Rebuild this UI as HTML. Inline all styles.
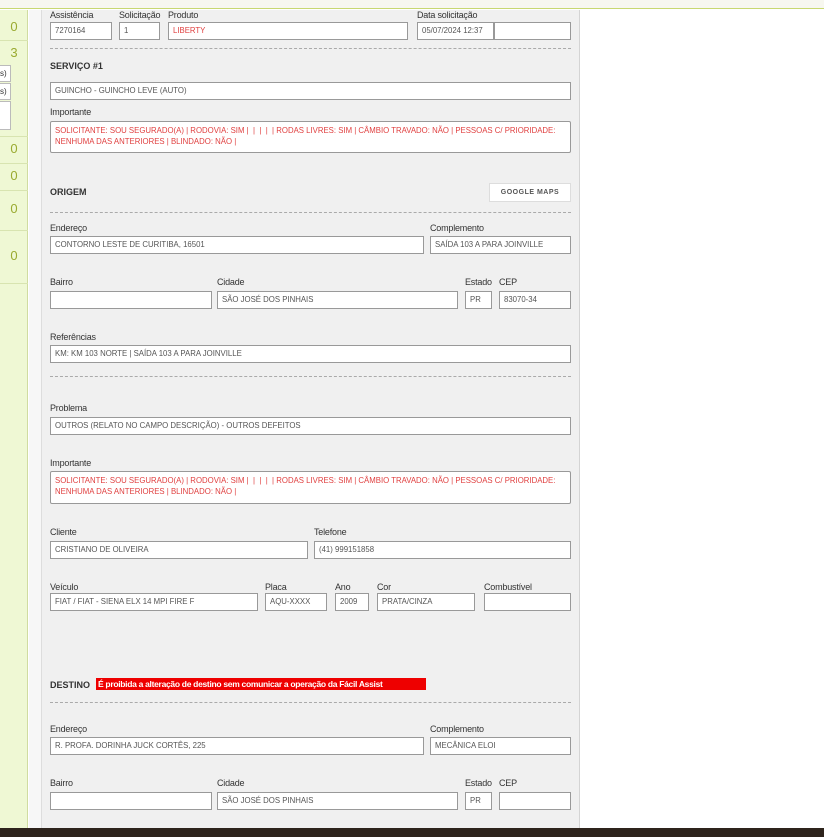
<!DOCTYPE html>
<html><head><meta charset="utf-8"><style>
*{margin:0;padding:0;box-sizing:border-box}
body{width:824px;height:837px;position:relative;overflow:hidden;background:#fff;font-family:"Liberation Sans",sans-serif}
.a{position:absolute}
.l{position:absolute;font-size:9px;color:#333;line-height:10px;letter-spacing:-0.2px}
.i{position:absolute;background:#fff;border:1px solid #999;font-size:7.8px;color:#555;padding:0 4px;line-height:16px;white-space:nowrap;overflow:hidden}
.r{color:#e04040}
.t{position:absolute;background:#fff;border:1px solid #999;border-radius:2px;font-size:7.8px;color:#e04040;padding:3px 4px;line-height:11px}
.d{position:absolute;left:50px;width:521px;border-top:1px dashed #aaa;height:0}
.h{position:absolute;font-size:9px;font-weight:bold;color:#333}
.n{position:absolute;left:0;width:28px;text-align:center;font-size:13px;color:#9aaa30}
.s{position:absolute;left:0;width:28px;height:1px;background:#d8e4b0}
</style></head><body>
<div class="a" style="left:0;top:0;width:824px;height:9px;background:#f7f7ef;border-bottom:1px solid #c8d870"></div>
<div class="a" style="left:0;top:10px;width:28px;height:818px;background:#eff8d4;border-right:1px solid #d0dca0"></div>
<div class="a" style="left:29px;top:10px;width:12px;height:818px;background:#f7f7f7"></div>
<div class="a" style="left:41px;top:10px;width:539px;height:818px;background:#f0f0f0;border-left:1px solid #ddd;border-right:1px solid #d4d4d4"></div>
<div class="a" style="left:0;top:828px;width:824px;height:9px;background:#2e241c"></div>
<div class="n" style="top:19px">0</div><div class="s" style="top:40px"></div>
<div class="n" style="top:45px">3</div>
<div class="a" style="left:0;top:65px;width:11px;height:17px;background:#fff;border:1px solid #bbb;border-left:0;font-size:8px;line-height:15px;color:#333">s)</div>
<div class="a" style="left:0;top:83px;width:11px;height:17px;background:#fff;border:1px solid #bbb;border-left:0;font-size:8px;line-height:15px;color:#333">s)</div>
<div class="a" style="left:0;top:101px;width:11px;height:29px;background:#fff;border:1px solid #bbb;border-left:0"></div>
<div class="s" style="top:136px"></div>
<div class="n" style="top:141px">0</div><div class="s" style="top:163px"></div>
<div class="n" style="top:168px">0</div><div class="s" style="top:190px"></div>
<div class="n" style="top:201px">0</div><div class="s" style="top:230px"></div>
<div class="n" style="top:248px">0</div><div class="s" style="top:283px"></div>

<div class="l" style="left:50px;top:10px">Assistência</div>
<div class="l" style="left:119px;top:10px">Solicitação</div>
<div class="l" style="left:168px;top:10px">Produto</div>
<div class="l" style="left:417px;top:10px">Data solicitação</div>
<div class="i" style="left:50px;top:22px;width:62px;height:18px">7270164</div>
<div class="i" style="left:119px;top:22px;width:41px;height:18px">1</div>
<div class="i r" style="left:168px;top:22px;width:240px;height:18px">LIBERTY</div>
<div class="i" style="left:417px;top:22px;width:77px;height:18px">05/07/2024 12:37</div>
<div class="i" style="left:494px;top:22px;width:77px;height:18px"></div>
<div class="d" style="top:48px"></div>
<div class="h" style="left:50px;top:61px">SERVIÇO #1</div>
<div class="i" style="left:50px;top:82px;width:521px;height:18px">GUINCHO - GUINCHO LEVE (AUTO)</div>
<div class="l" style="left:50px;top:107px">Importante</div>
<div class="t" style="left:50px;top:121px;width:521px;height:32px">SOLICITANTE: SOU SEGURADO(A) | RODOVIA: SIM | &nbsp;| &nbsp;| &nbsp;| &nbsp;| RODAS LIVRES: SIM | CÂMBIO TRAVADO: NÃO | PESSOAS C/ PRIORIDADE: NENHUMA DAS ANTERIORES | BLINDADO: NÃO |</div>
<div class="h" style="left:50px;top:187px">ORIGEM</div>
<div class="a" style="left:489px;top:183px;width:82px;height:19px;background:#fff;border:1px solid #ddd;font-size:7px;font-weight:bold;color:#555;text-align:center;line-height:17px;letter-spacing:0.5px">GOOGLE MAPS</div>
<div class="d" style="top:212px"></div>
<div class="l" style="left:50px;top:223px">Endereço</div>
<div class="l" style="left:430px;top:223px">Complemento</div>
<div class="i" style="left:50px;top:236px;width:374px;height:18px">CONTORNO LESTE DE CURITIBA, 16501</div>
<div class="i" style="left:430px;top:236px;width:141px;height:18px">SAÍDA 103 A PARA JOINVILLE</div>
<div class="l" style="left:50px;top:277px">Bairro</div>
<div class="l" style="left:217px;top:277px">Cidade</div>
<div class="l" style="left:465px;top:277px">Estado</div>
<div class="l" style="left:499px;top:277px">CEP</div>
<div class="i" style="left:50px;top:291px;width:162px;height:18px"></div>
<div class="i" style="left:217px;top:291px;width:241px;height:18px">SÃO JOSÉ DOS PINHAIS</div>
<div class="i" style="left:465px;top:291px;width:27px;height:18px">PR</div>
<div class="i" style="left:499px;top:291px;width:72px;height:18px">83070-34</div>
<div class="l" style="left:50px;top:332px">Referências</div>
<div class="i" style="left:50px;top:345px;width:521px;height:18px">KM: KM 103 NORTE | SAÍDA 103 A PARA JOINVILLE</div>
<div class="d" style="top:376px"></div>
<div class="l" style="left:50px;top:403px">Problema</div>
<div class="i" style="left:50px;top:417px;width:521px;height:18px">OUTROS (RELATO NO CAMPO DESCRIÇÃO) - OUTROS DEFEITOS</div>
<div class="l" style="left:50px;top:458px">Importante</div>
<div class="t" style="left:50px;top:471px;width:521px;height:33px">SOLICITANTE: SOU SEGURADO(A) | RODOVIA: SIM | &nbsp;| &nbsp;| &nbsp;| &nbsp;| RODAS LIVRES: SIM | CÂMBIO TRAVADO: NÃO | PESSOAS C/ PRIORIDADE: NENHUMA DAS ANTERIORES | BLINDADO: NÃO |</div>
<div class="l" style="left:50px;top:527px">Cliente</div>
<div class="l" style="left:314px;top:527px">Telefone</div>
<div class="i" style="left:50px;top:541px;width:258px;height:18px">CRISTIANO DE OLIVEIRA</div>
<div class="i" style="left:314px;top:541px;width:257px;height:18px">(41) 999151858</div>
<div class="l" style="left:50px;top:582px">Veículo</div>
<div class="l" style="left:265px;top:582px">Placa</div>
<div class="l" style="left:335px;top:582px">Ano</div>
<div class="l" style="left:377px;top:582px">Cor</div>
<div class="l" style="left:484px;top:582px">Combustível</div>
<div class="i" style="left:50px;top:593px;width:208px;height:18px">FIAT / FIAT - SIENA ELX 14 MPI FIRE F</div>
<div class="i" style="left:265px;top:593px;width:62px;height:18px">AQU-XXXX</div>
<div class="i" style="left:335px;top:593px;width:34px;height:18px">2009</div>
<div class="i" style="left:377px;top:593px;width:98px;height:18px">PRATA/CINZA</div>
<div class="i" style="left:484px;top:593px;width:87px;height:18px"></div>
<div class="h" style="left:50px;top:680px">DESTINO</div>
<div class="a" style="left:96px;top:678px;width:330px;height:12px;background:#ee0000;color:#fff;font-size:8.5px;font-weight:bold;line-height:12px;padding-left:2px;white-space:nowrap;letter-spacing:-0.3px">É proibida a alteração de destino sem comunicar a operação da Fácil Assist</div>
<div class="d" style="top:702px"></div>
<div class="l" style="left:50px;top:724px">Endereço</div>
<div class="l" style="left:430px;top:724px">Complemento</div>
<div class="i" style="left:50px;top:737px;width:374px;height:18px">R. PROFA. DORINHA JUCK CORTÊS, 225</div>
<div class="i" style="left:430px;top:737px;width:141px;height:18px">MECÂNICA ELOI</div>
<div class="l" style="left:50px;top:778px">Bairro</div>
<div class="l" style="left:217px;top:778px">Cidade</div>
<div class="l" style="left:465px;top:778px">Estado</div>
<div class="l" style="left:499px;top:778px">CEP</div>
<div class="i" style="left:50px;top:792px;width:162px;height:18px"></div>
<div class="i" style="left:217px;top:792px;width:241px;height:18px">SÃO JOSÉ DOS PINHAIS</div>
<div class="i" style="left:465px;top:792px;width:27px;height:18px">PR</div>
<div class="i" style="left:499px;top:792px;width:72px;height:18px"></div>
</body></html>
